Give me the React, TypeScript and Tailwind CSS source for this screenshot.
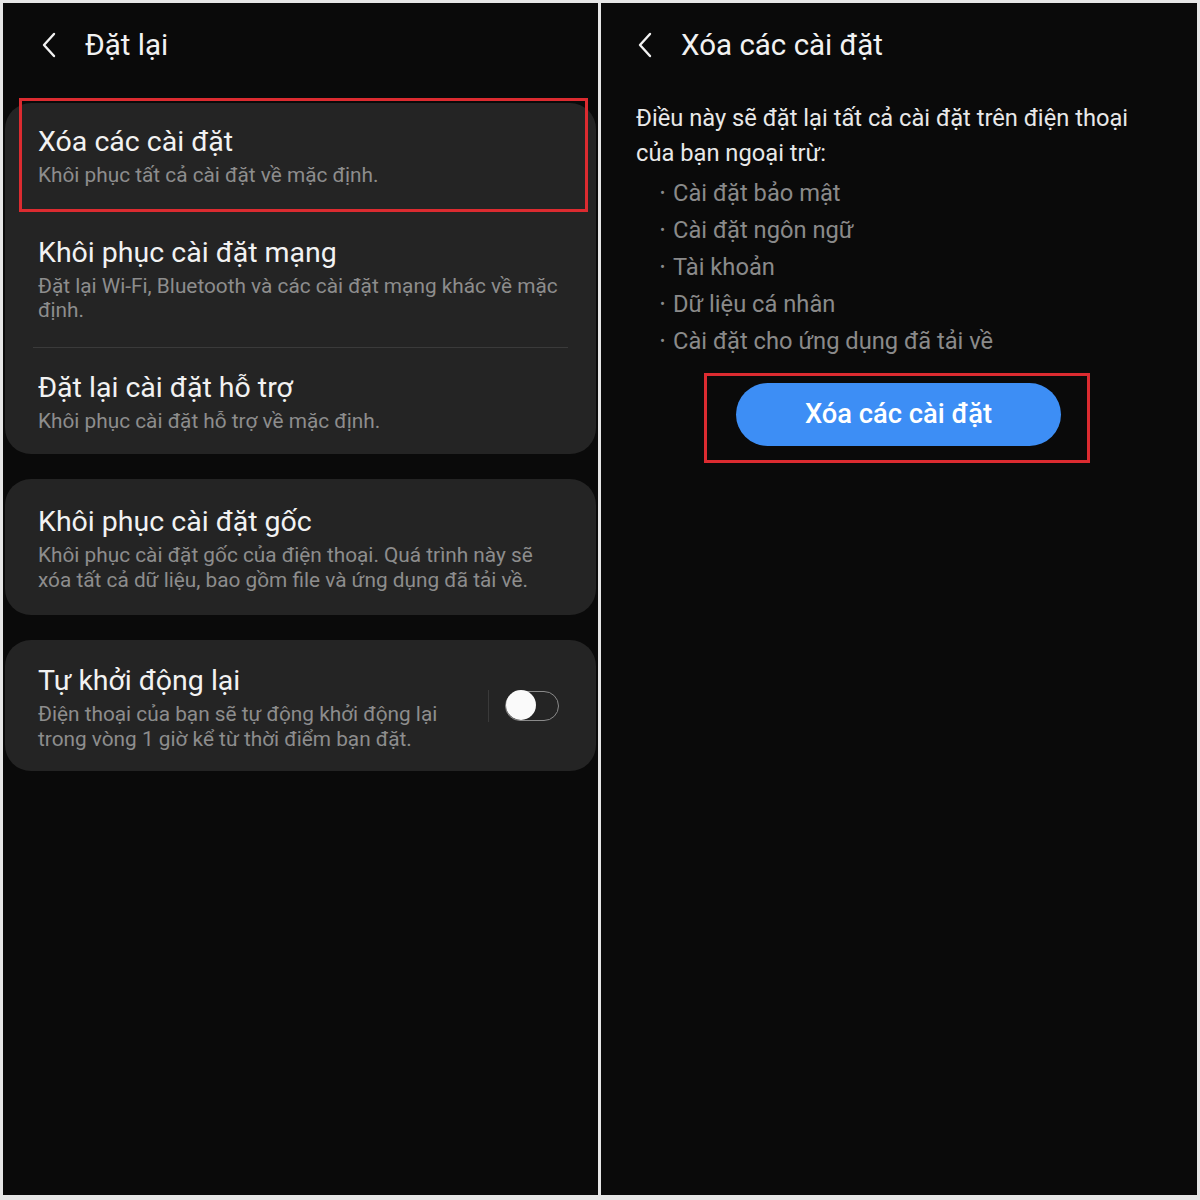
import React from "react";

const font = { fontFamily: "Roboto, 'Noto Sans', sans-serif" };

function BackIcon() {
  return (
    <svg width="18" height="26" viewBox="0 0 18 26" fill="none" className="shrink-0">
      <path d="M14 2 L4 13 L14 24" stroke="#f2f2f2" strokeWidth="2.4" strokeLinecap="round" strokeLinejoin="round" />
    </svg>
  );
}

function Header({ title, size }: { title: string; size: string }) {
  return (
    <div className="flex items-center h-[78px]">
      <div className="w-[80px] pl-[35px] flex items-center">
        <BackIcon />
      </div>
      <span className={`${size} leading-[34px] text-[#f2f2f2] whitespace-nowrap`}>{title}</span>
    </div>
  );
}

type Item = { title: string; sub: string[] };

const group1: Item[] = [
  { title: "Xóa các cài đặt", sub: ["Khôi phục tất cả cài đặt về mặc định."] },
  { title: "Khôi phục cài đặt mạng", sub: ["Đặt lại Wi-Fi, Bluetooth và các cài đặt mạng khác về mặc", "định."] },
  { title: "Đặt lại cài đặt hỗ trợ", sub: ["Khôi phục cài đặt hỗ trợ về mặc định."] },
];

function Row({ item, className }: { item: Item; className: string }) {
  return (
    <div className={`px-[33px] ${className}`}>
      <div className="text-[28.5px] leading-[32px] text-[#f2f2f2] whitespace-nowrap">{item.title}</div>
      <div className="mt-[5px] text-[20.8px] leading-[24.5px] text-[#8d8d8d] whitespace-nowrap">
        {item.sub.map((s) => (
          <div key={s}>{s}</div>
        ))}
      </div>
    </div>
  );
}

const exceptions = [
  "Cài đặt bảo mật",
  "Cài đặt ngôn ngữ",
  "Tài khoản",
  "Dữ liệu cá nhân",
  "Cài đặt cho ứng dụng đã tải về",
];

export default function App() {
  return (
    <div className="w-[1200px] h-[1200px] bg-[#e6e6e6] pt-[3px] pl-[3px] pr-[3px] pb-[5px] flex gap-[3px]" style={font}>
      {/* Left: Đặt lại */}
      <div className="relative w-[595px] h-full bg-[#0a0a0a] px-[2px] pt-[3px]">
        <Header title="Đặt lại" size="text-[29.5px]" />
        <div className="mt-[19px] rounded-[26px] bg-[#242424]">
          <Row item={group1[0]} className="pt-[23px] pb-[24px]" />
          <Row item={group1[1]} className="pt-[25px] pb-[24px]" />
          <div className="mx-[28px] h-px bg-[#3a3a3a]" />
          <Row item={group1[2]} className="pt-[24px] pb-[21px]" />
        </div>
        <div className="mt-[25px] rounded-[26px] bg-[#242424]">
          <Row
            item={{
              title: "Khôi phục cài đặt gốc",
              sub: ["Khôi phục cài đặt gốc của điện thoại. Quá trình này sẽ", "xóa tất cả dữ liệu, bao gồm file và ứng dụng đã tải về."],
            }}
            className="pt-[27px] pb-[23px]"
          />
        </div>
        <div className="mt-[25px] rounded-[26px] bg-[#242424] flex items-center">
          <Row
            item={{
              title: "Tự khởi động lại",
              sub: ["Điện thoại của bạn sẽ tự động khởi động lại", "trong vòng 1 giờ kể từ thời điểm bạn đặt."],
            }}
            className="flex-1 pt-[25px] pb-[20px]"
          />
          <div className="flex items-center gap-[16px] pr-[37px]">
            <div className="w-px h-[32px] bg-[#3a3a3a]" />
            <div className="relative w-[54px] h-[30px] rounded-full border-[1.5px] border-[#8a8a8a]">
              <div className="absolute left-[0px] top-[-1.5px] w-[30px] h-[30px] rounded-full bg-[#fafafa]" />
            </div>
          </div>
        </div>
        <div className="absolute left-[16px] top-[95px] w-[569px] h-[114px] border-[3px] border-[#dc2b30]" />
      </div>

      {/* Right: Xóa các cài đặt */}
      <div className="relative w-[596px] h-full bg-[#0a0a0a] pt-[3px]">
        <Header title="Xóa các cài đặt" size="text-[29.5px]" />
        <div className="pl-[35px] pt-[17px]">
          <p className="text-[23.7px] leading-[35px] text-[#e8e8e8] whitespace-nowrap">
            Điều này sẽ đặt lại tất cả cài đặt trên điện thoại
            <br />
            của bạn ngoại trừ:
          </p>
          <ul className="mt-[4px] pl-[24px]">
            {exceptions.map((e) => (
              <li key={e} className="flex items-center text-[23.7px] leading-[37px] text-[#8a8a8a] whitespace-nowrap">
                <span className="w-[13px] text-[15px]">•</span>
                <span>{e}</span>
              </li>
            ))}
          </ul>
        </div>
        <div className="mt-[23px] flex justify-center">
          <div className="ml-[-1px] w-[325px] h-[63px] rounded-full bg-[#3d8ef5] flex items-center justify-center text-[27.3px] font-medium text-white">
            Xóa các cài đặt
          </div>
        </div>
        <div className="absolute left-[103px] top-[370px] w-[386px] h-[90px] border-[3px] border-[#dc2b30]" />
      </div>
    </div>
  );
}
